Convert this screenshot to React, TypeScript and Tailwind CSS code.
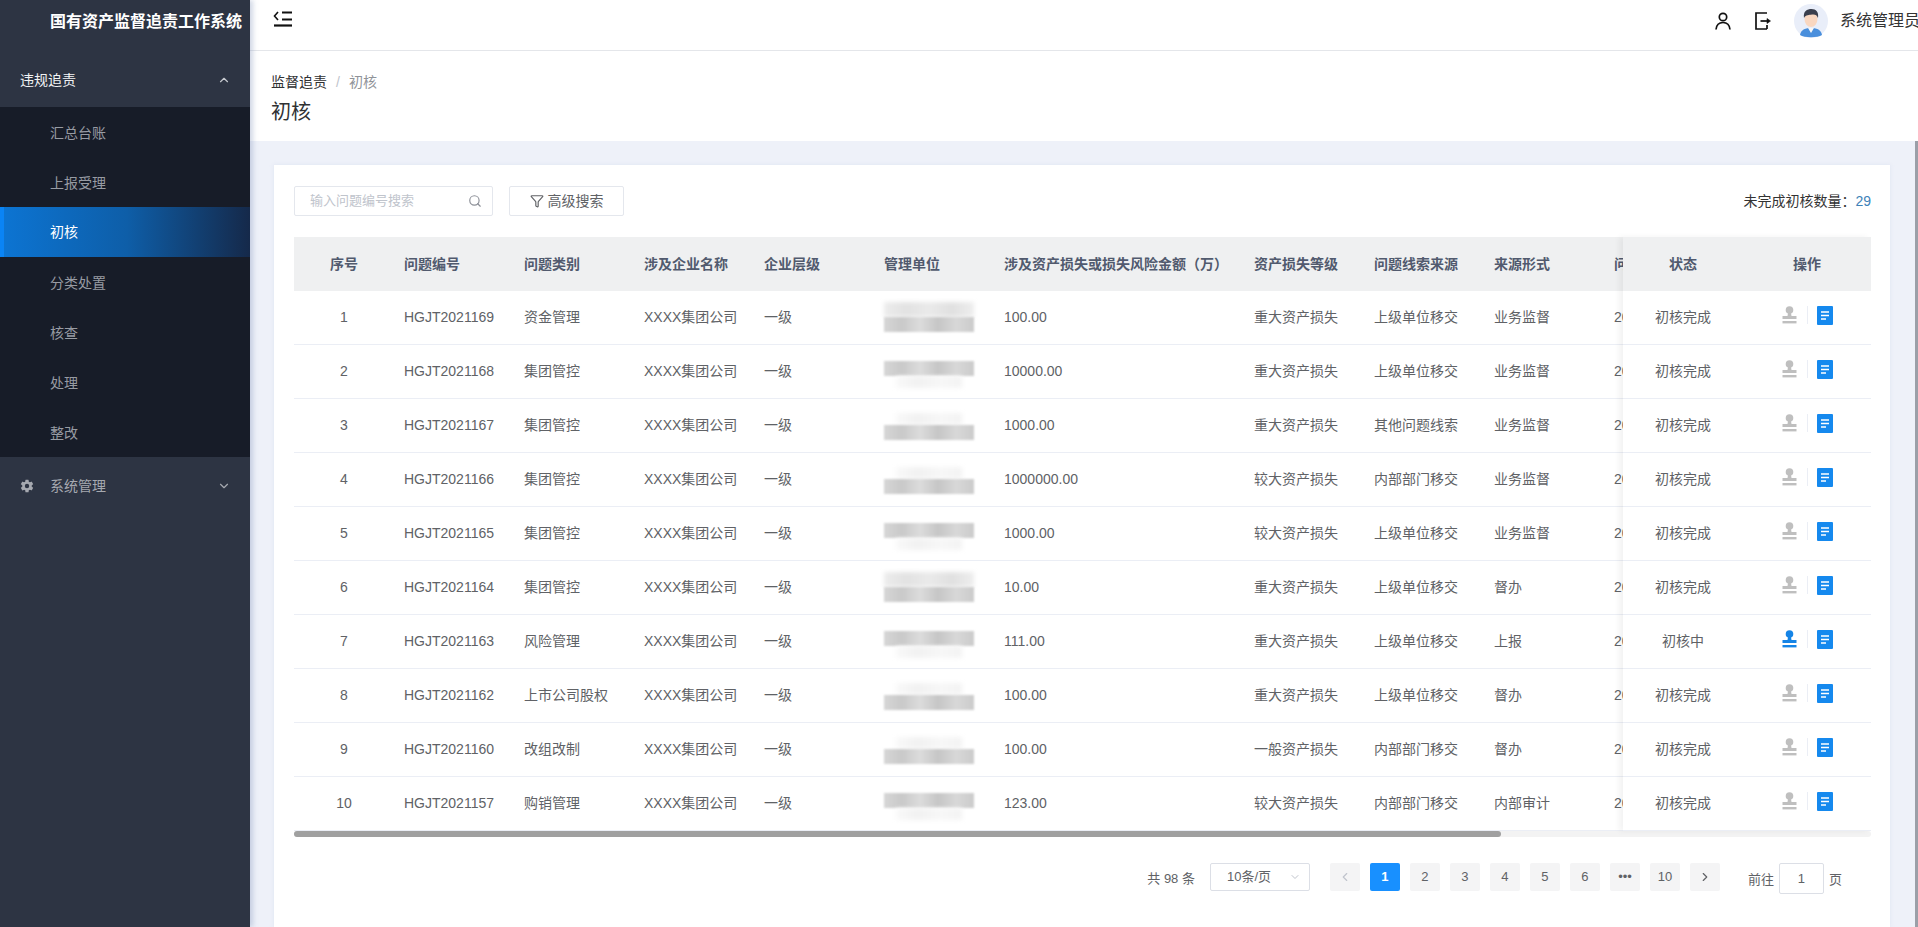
import { ChevronDown, ChevronLeft, ChevronRight, ChevronUp, Filter, Search } from "lucide-react"
import { IoSettingsSharp } from "react-icons/io5"

const font = { fontFamily: '"Liberation Sans", "Noto Sans CJK SC", sans-serif' }

const subMenu = ["汇总台账", "上报受理", "初核", "分类处置", "核查", "处理", "整改"]

const rows = [
  { no: "HGJT2021169", type: "资金管理", amount: "100.00", level: "重大资产损失", clue: "上级单位移交", form: "业务监督", status: "初核完成", blur: "dd" },
  { no: "HGJT2021168", type: "集团管控", amount: "10000.00", level: "重大资产损失", clue: "上级单位移交", form: "业务监督", status: "初核完成", blur: "dl" },
  { no: "HGJT2021167", type: "集团管控", amount: "1000.00", level: "重大资产损失", clue: "其他问题线索", form: "业务监督", status: "初核完成", blur: "ld" },
  { no: "HGJT2021166", type: "集团管控", amount: "1000000.00", level: "较大资产损失", clue: "内部部门移交", form: "业务监督", status: "初核完成", blur: "ld" },
  { no: "HGJT2021165", type: "集团管控", amount: "1000.00", level: "较大资产损失", clue: "上级单位移交", form: "业务监督", status: "初核完成", blur: "dl" },
  { no: "HGJT2021164", type: "集团管控", amount: "10.00", level: "重大资产损失", clue: "上级单位移交", form: "督办", status: "初核完成", blur: "dd" },
  { no: "HGJT2021163", type: "风险管理", amount: "111.00", level: "重大资产损失", clue: "上级单位移交", form: "上报", status: "初核中", blur: "dl" },
  { no: "HGJT2021162", type: "上市公司股权", amount: "100.00", level: "重大资产损失", clue: "上级单位移交", form: "督办", status: "初核完成", blur: "ld" },
  { no: "HGJT2021160", type: "改组改制", amount: "100.00", level: "一般资产损失", clue: "内部部门移交", form: "督办", status: "初核完成", blur: "ld" },
  { no: "HGJT2021157", type: "购销管理", amount: "123.00", level: "较大资产损失", clue: "内部部门移交", form: "内部审计", status: "初核完成", blur: "dl" },
]

const pages = ["1", "2", "3", "4", "5", "6", "•••", "10"]

function CollapseIcon() {
  return (
    <svg width="20" height="18" viewBox="0 0 20 18" fill="none" stroke="#111" strokeWidth="2">
      <path d="M5 2 L1.5 6 L5 10" strokeWidth="1.6" />
      <path d="M9 2.5 H19 M9 9.5 H19" />
      <path d="M1 15.5 H19" strokeWidth="2.2" />
    </svg>
  )
}

function UserIcon() {
  return (
    <svg width="16" height="18" viewBox="0 0 16 18" fill="none" stroke="#111" strokeWidth="1.7">
      <circle cx="8" cy="5" r="3.7" />
      <path d="M1 17.5 C1.5 12.5 4.5 10.5 8 10.5 C11.5 10.5 14.5 12.5 15 17.5" />
    </svg>
  )
}

function ExitIcon() {
  return (
    <svg width="16" height="18" viewBox="0 0 16 18" fill="none" stroke="#111" strokeWidth="1.7">
      <path d="M12 1 H1 V17 H12 M12 13 V17" />
      <path d="M5.5 9 H13" />
      <path d="M12 6.5 L15.5 9 L12 11.5 Z" fill="#111" strokeWidth="0.6" />
    </svg>
  )
}

function Avatar() {
  return (
    <svg width="34" height="34" viewBox="0 0 34 34">
      <circle cx="17" cy="17" r="17" fill="#e9eef9" />
      <path d="M6 31 C7 25 12 24 17 24 C22 24 27 25 28 31 C24 34 10 34 6 31 Z" fill="#4a8fdc" />
      <path d="M14 24 L17 29 L20 24 Z" fill="#f7f7f7" />
      <ellipse cx="17" cy="15" rx="6.5" ry="8" fill="#f9d7c0" />
      <path d="M10 14 C9 7 13 5 17.5 5 C22 5 25 8 24 14 C23 11 21 10 18 10.5 C15 11 12 10.5 10 14 Z" fill="#3a3f4d" />
    </svg>
  )
}

function StampIcon({ active }: { active: boolean }) {
  const color = active ? "#1584e6" : "#bfbfbf"
  return (
    <svg width="15" height="18" viewBox="0 0 15 18" fill={color}>
      <circle cx="7.5" cy="4" r="3.8" />
      <path d="M6 7 H9 L9.5 10 H14.5 V13 H0.5 V10 H5.5 Z" />
      <rect x="0.5" y="15" width="14" height="2.4" />
    </svg>
  )
}

function DocIcon() {
  return (
    <svg width="16" height="19" viewBox="0 0 16 19">
      <rect width="16" height="19" rx="1" fill="#1589ee" />
      <path d="M4 6 H12 M4 9.5 H12 M4 13 H9" stroke="#fff" strokeWidth="1.6" />
    </svg>
  )
}

// the reference has these names pixelated out, so they are only shapes
function Redacted({ pattern }: { pattern: string }) {
  if (pattern === "dd") {
    return (
      <div className="flex h-[36px] w-[90px] flex-col justify-center">
        <div className="h-[15px] w-full bg-[linear-gradient(90deg,#ececec,#e2e2e2,#eaeaea,#e0e0e0,#eeeeee)] blur-[2px]" />
        <div className="h-[15px] w-full bg-[linear-gradient(90deg,#d6d6d6,#c9c9c9,#dcdcdc,#c6c6c6,#d8d8d8,#cbcbcb)] blur-[1px]" />
      </div>
    )
  }
  const wrap =
    pattern === "dl"
      ? "flex h-[36px] w-[90px] flex-col justify-start pt-[8px]"
      : "flex h-[36px] w-[90px] flex-col justify-end pb-[3px]"
  return (
    <div className={wrap}>
      {pattern.split("").map((kind, i) => (
        <div
          key={i}
          className={
            kind === "d"
              ? "h-[15px] w-full bg-[linear-gradient(90deg,#d6d6d6,#c9c9c9,#dcdcdc,#c6c6c6,#d8d8d8,#cbcbcb)] blur-[1px]"
              : "mx-3 h-[12px] bg-[linear-gradient(90deg,#f9f9f9,#f1f1f1,#f7f7f7,#f3f3f3)] blur-[2px]"
          }
        />
      ))}
    </div>
  )
}

function Sidebar() {
  return (
    <aside className="z-10 flex h-full w-[250px] shrink-0 flex-col bg-[#2d3443] shadow-[3px_0_5px_rgba(120,140,180,0.35)]">
      <div className="flex h-[57px] items-start pl-[50px] pt-[11px] text-base font-bold leading-[22px] text-white">
        国有资产监督追责工作系统
      </div>
      <div className="flex h-[50px] items-center justify-between pb-1 pl-5 pr-[19px] text-sm text-[#f2f3f5]">
        <span>违规追责</span>
        <ChevronUp size={14} className="text-[#c6c9cf]" />
      </div>
      <div className="bg-[#171c28]">
        {subMenu.map((item) => (
          <div
            key={item}
            className={
              item === "初核"
                ? "flex h-[50px] items-center border-l-4 border-[#0a84f5] bg-[linear-gradient(90deg,#0c74d2,#0e5ea8_50%,#15294a)] pl-[46px] text-sm text-white"
                : "flex h-[50px] items-center pl-[50px] pt-[2px] text-sm text-[#979ba3]"
            }
          >
            {item}
          </div>
        ))}
      </div>
      <div className="flex h-[58px] items-center justify-between pl-5 pr-[19px] text-sm text-[#a6a9b0]">
        <span className="flex items-center gap-4">
          <IoSettingsSharp size={14} />
          系统管理
        </span>
        <ChevronDown size={14} />
      </div>
    </aside>
  )
}

function TopBar() {
  return (
    <header className="flex h-[51px] shrink-0 items-start justify-between border-b border-[#e4e6ea] bg-white pl-[23px]">
      <div className="pt-[10px]">
        <CollapseIcon />
      </div>
      <div className="flex items-center pt-[4px]">
        <UserIcon />
        <div className="ml-6">
          <ExitIcon />
        </div>
        <div className="ml-[23px]">
          <Avatar />
        </div>
        <span className="ml-[12px] w-[78px] overflow-hidden whitespace-nowrap text-base text-[#333]">系统管理员</span>
      </div>
    </header>
  )
}

function Toolbar() {
  return (
    <div className="flex h-[30px] items-center justify-between">
      <div className="flex items-center gap-4">
        <div className="flex h-[30px] w-[199px] items-center justify-between rounded-[2px] border border-[#e4e7ed] pl-[15px] pr-[10px] text-[13px] text-[#c0c4cc]">
          输入问题编号搜索
          <Search size={14} className="text-[#8d9098]" />
        </div>
        <div className="flex h-[30px] w-[115px] items-center justify-center gap-1 rounded-[2px] border border-[#e4e7ed] text-sm text-[#606266]">
          <Filter size={14} />
          高级搜索
        </div>
      </div>
      <div className="text-sm text-[#333]">
        未完成初核数量：<span className="text-[#3d82b8]">29</span>
      </div>
    </div>
  )
}

function DataTable() {
  return (
    <div className="relative mt-[21px]">
      <div className="flex">
        <div className="w-[1329px] overflow-hidden">
          <div className="flex h-[54px] items-center bg-[#eff0f1] text-sm font-semibold text-[#515a6e]">
            <div className="w-[100px] text-center">序号</div>
            <div className="w-[120px] pl-[10px]">问题编号</div>
            <div className="w-[120px] pl-[10px]">问题类别</div>
            <div className="w-[120px] pl-[10px]">涉及企业名称</div>
            <div className="w-[120px] pl-[10px]">企业层级</div>
            <div className="w-[120px] pl-[10px]">管理单位</div>
            <div className="w-[250px] pl-[10px]">涉及资产损失或损失风险金额（万）</div>
            <div className="w-[120px] pl-[10px]">资产损失等级</div>
            <div className="w-[120px] pl-[10px]">问题线索来源</div>
            <div className="w-[120px] pl-[10px]">来源形式</div>
            <div className="w-[19px] overflow-hidden whitespace-nowrap pl-[10px]">问题发现时间</div>
          </div>
          {rows.map((row, i) => (
            <div key={row.no} className="flex h-[54px] items-center border-b border-[#ebeef5] pb-px text-sm text-[#606266]">
              <div className="w-[100px] text-center">{i + 1}</div>
              <div className="w-[120px] pl-[10px]">{row.no}</div>
              <div className="w-[120px] pl-[10px]">{row.type}</div>
              <div className="w-[120px] pl-[10px]">XXXX集团公司</div>
              <div className="w-[120px] pl-[10px]">一级</div>
              <div className="w-[120px] pl-[10px]">
                <Redacted pattern={row.blur} />
              </div>
              <div className="w-[250px] pl-[10px]">{row.amount}</div>
              <div className="w-[120px] pl-[10px]">{row.level}</div>
              <div className="w-[120px] pl-[10px]">{row.clue}</div>
              <div className="w-[120px] pl-[10px]">{row.form}</div>
              <div className="w-[19px] overflow-hidden whitespace-nowrap pl-[10px]">2021-06-01</div>
            </div>
          ))}
        </div>
        <div className="z-10 w-[248px] bg-white shadow-[-4px_0_6px_rgba(0,0,0,0.05)]">
          <div className="flex h-[54px] items-center bg-[#eff0f1] text-sm font-semibold text-[#515a6e]">
            <div className="w-[120px] text-center">状态</div>
            <div className="flex-1 text-center">操作</div>
          </div>
          {rows.map((row) => (
            <div key={row.no} className="flex h-[54px] items-center border-b border-[#ebeef5] pb-px text-sm text-[#606266]">
              <div className="w-[120px] text-center">{row.status}</div>
              <div className="flex flex-1 items-center pb-1 pl-[39px]">
                <StampIcon active={row.status === "初核中"} />
                <div className="ml-[10px] mr-[9px] h-[18px] w-px bg-[#ebeef5]" />
                <DocIcon />
              </div>
            </div>
          ))}
        </div>
      </div>
      <div className="h-[6px] rounded-[3px] bg-[#f3f3f3]">
        <div className="h-[6px] w-[1207px] rounded-[3px] bg-[#a0a0a0]" />
      </div>
    </div>
  )
}

function Pagination() {
  return (
    <div className="mt-[26px] flex items-start justify-end pr-[29px] text-[13px] text-[#606266]">
      <span className="mt-[6px]">共 98 条</span>
      <div className="ml-[15px] flex h-[28px] w-[100px] items-center justify-between rounded-[2px] border border-[#dcdfe6] pl-4 pr-2">
        10条/页
        <ChevronDown size={12} className="text-[#c0c4cc]" />
      </div>
      <div className="ml-[20px] flex gap-[10px]">
        <div className="flex h-[28px] w-[30px] items-center justify-center rounded-[2px] bg-[#f4f4f5] text-[#c0c4cc]">
          <ChevronLeft size={14} />
        </div>
        {pages.map((page) => (
          <div
            key={page}
            className={
              page === "1"
                ? "flex h-[28px] w-[30px] items-center justify-center rounded-[2px] bg-[#1890ff] font-semibold text-white"
                : "flex h-[28px] w-[30px] items-center justify-center rounded-[2px] bg-[#f4f4f5] font-medium text-[#606266]"
            }
          >
            {page}
          </div>
        ))}
        <div className="flex h-[28px] w-[30px] items-center justify-center rounded-[2px] bg-[#f4f4f5]">
          <ChevronRight size={14} />
        </div>
      </div>
      <span className="ml-7 mt-[7px]">前往</span>
      <div className="ml-[5px] flex h-[31px] w-[45px] items-center justify-center rounded-[2px] border border-[#dcdfe6]">1</div>
      <span className="ml-[5px] mt-[7px]">页</span>
    </div>
  )
}

export default function App() {
  return (
    <div className="flex h-screen overflow-hidden bg-[#eef1f9]" style={font}>
      <Sidebar />
      <main className="flex min-w-0 flex-1 flex-col">
        <TopBar />
        <div className="h-[90px] shrink-0 bg-white pl-[21px] pt-[21px]">
          <div className="flex h-[20px] items-center gap-[9px] text-sm leading-none">
            <span className="text-[#303133]">监督追责</span>
            <span className="text-[#c0c4cc]">/</span>
            <span className="text-[#909399]">初核</span>
          </div>
          <h1 className="mt-[6px] text-xl leading-7 text-[#303133]">初核</h1>
        </div>
        <div className="flex min-h-0 flex-1">
          <div className="min-w-0 flex-1 pl-[24px] pr-[25px] pt-[24px]">
            <div className="h-full bg-white pl-[20px] pr-[19px] pt-[21px] shadow-[0_0_4px_rgba(200,210,230,0.4)]">
              <Toolbar />
              <DataTable />
              <Pagination />
            </div>
          </div>
          <div className="w-[3px] shrink-0 bg-[#9b9fa8]" />
        </div>
      </main>
    </div>
  )
}
